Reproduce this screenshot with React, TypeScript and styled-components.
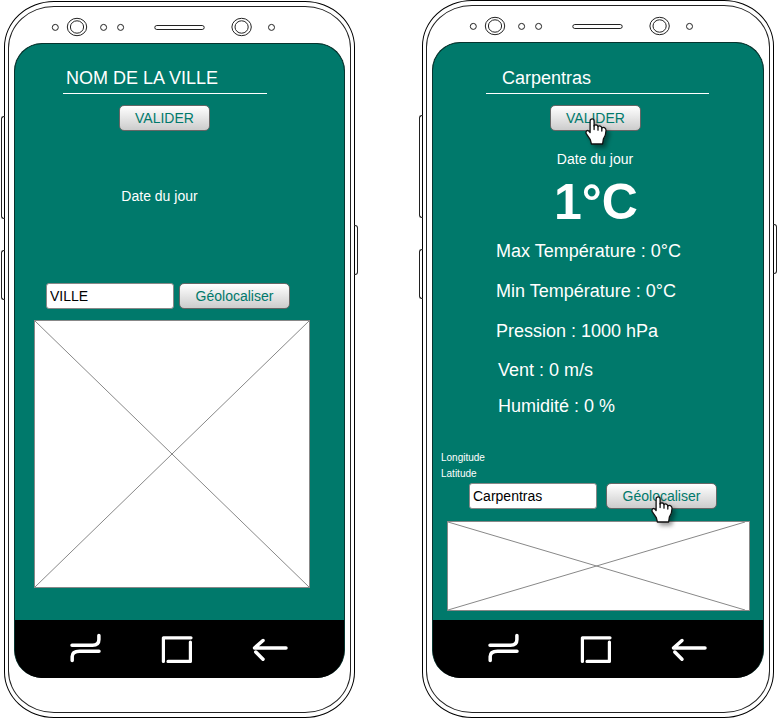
import React from 'react';
import styled, { createGlobalStyle } from 'styled-components';

const TEAL = '#00796b';

const GlobalStyle = createGlobalStyle`
  *, *::before, *::after { box-sizing: border-box; }
  body {
    margin: 0;
    background: #fff;
    font-family: "Liberation Sans", Arial, sans-serif;
  }
`;

const Board = styled.main`
  display: grid;
  grid-template-columns: 351fr 352fr;
  align-items: end;
  column-gap: 67px;
  padding: 0 3px 0 4px;
`;

const Shell = styled.section`
  position: relative;
  padding: 4px 3px;
  border: 1px solid #000;
  border-radius: 50px / 46px;
  background: #fff;
`;

const SideKey = styled.span<{ $side: 'left' | 'right'; $top: number; $height: number }>`
  position: absolute;
  ${({ $side }) => $side}: -4px;
  top: ${({ $top }) => $top}px;
  width: 4px;
  height: ${({ $height }) => $height}px;
  border: 1px solid #222;
  ${({ $side }) => ($side === 'left' ? 'border-right: 0; border-radius: 3px 0 0 3px;' : 'border-left: 0; border-radius: 0 3px 3px 0;')}
`;

const Face = styled.div`
  padding: 0 5px 34px;
  border: 1px solid #222;
  border-radius: 46px / 42px;
`;

const Bezel = styled.header`
  height: 36px;
  padding: 9px 0 0 35px;

  svg { display: block; }
`;

const Screen = styled.div`
  overflow: hidden;
  border: 1px solid #06342e;
  border-bottom: 0;
  border-radius: 28px;
  background: #000;
`;

const Content = styled.div<{ $top: number; $bottom: number }>`
  padding: ${({ $top }) => $top}px 0 ${({ $bottom }) => $bottom}px;
  background: ${TEAL};
  color: #fff;
`;

const SearchForm = styled.form<{ $left: number; $right: number }>`
  display: flex;
  flex-direction: column;
  align-items: flex-start;
  gap: 11px;
  margin: 0 ${({ $right }) => $right}px 0 ${({ $left }) => $left}px;
`;

const CityInput = styled.input<{ $indent: number }>`
  width: 100%;
  height: 30px;
  padding: 0 0 0 ${({ $indent }) => $indent}px;
  border: 0;
  border-bottom: 1px solid #fff;
  border-radius: 0;
  outline: 0;
  background: transparent;
  color: #fff;
  font: 18px "Liberation Sans", Arial, sans-serif;
`;

const ButtonHolder = styled.div<{ $left?: number }>`
  position: relative;
  margin-left: ${({ $left = 0 }) => $left}px;
`;

const PushButton = styled.button`
  display: block;
  height: 26px;
  padding: 0 15px;
  border: 1px solid #666;
  border-radius: 5px;
  background: linear-gradient(#fff, #ccc);
  color: ${TEAL};
  font: 14px "Liberation Sans", Arial, sans-serif;
`;

const LocateButton = styled(PushButton)`
  min-width: 111px;
`;

const Pointer = styled.svg<{ $left: number }>`
  position: absolute;
  left: ${({ $left }) => $left}px;
  top: 13px;
  overflow: visible;
  filter: drop-shadow(3px 3px 2px rgba(0, 0, 0, 0.4));
  pointer-events: none;
`;

const Today = styled.p<{ $above: number; $right: number }>`
  margin: ${({ $above }) => $above}px 0 0;
  padding-right: ${({ $right }) => $right}px;
  font-size: 14px;
  line-height: 20px;
  text-align: center;
`;

const Temperature = styled.p`
  margin: 5px 0 0;
  padding-right: 4px;
  font-size: 50px;
  font-weight: 700;
  line-height: 56px;
  text-align: center;
`;

const Readings = styled.ul<{ $above: number; $left: number; $gap: number }>`
  display: flex;
  flex-direction: column;
  gap: ${({ $gap }) => $gap}px;
  margin: ${({ $above }) => $above}px 0 0 ${({ $left }) => $left}px;
  padding: 0;
  list-style: none;
  font-size: 18px;
  line-height: 20px;
`;

const Coordinates = styled.ul`
  margin: 34px 0 0 8px;
  padding: 0;
  list-style: none;
  font-size: 10px;
  line-height: 16px;
`;

const LocateForm = styled.form<{ $above: number; $left: number; $gap: number }>`
  display: flex;
  gap: ${({ $gap }) => $gap}px;
  margin: ${({ $above }) => $above}px 0 0 ${({ $left }) => $left}px;
`;

const PlaceInput = styled.input`
  width: 128px;
  height: 26px;
  padding: 0 3px;
  border: 1px solid #888;
  border-radius: 3px;
  outline: 0;
  background: #fff;
  color: #000;
  font: 14px "Liberation Sans", Arial, sans-serif;
`;

const MapFrame = styled.div<{ $above: number; $left: number; $right: number; $height: number; $inset?: number }>`
  height: ${({ $height }) => $height}px;
  margin: ${({ $above }) => $above}px ${({ $right }) => $right}px 0 ${({ $left }) => $left}px;
  padding-right: ${({ $inset = 0 }) => $inset}px;
  border: 1px solid #888;
  background: #fff;

  svg { display: block; width: 100%; height: 100%; }
`;

const NavBar = styled.nav`
  display: flex;
  height: 58px;
  padding: 12px 55px 0 54px;
  justify-content: space-between;
  background: #000;
`;

const NavButton = styled.button`
  height: 34px;
  padding: 0;
  border: 0;
  background: none;

  svg { display: block; }
`;

function Lens({ x }: { x: number }) {
  return (
    <>
      <ellipse cx={x} cy="11" rx="9.7" ry="8.7" />
      <ellipse cx={x} cy="11" rx="6.6" ry="6.2" />
    </>
  );
}

function Sensors() {
  return (
    <svg width="228" height="22" viewBox="0 0 228 22" fill="#fff" stroke="#222" strokeWidth="1" aria-hidden="true">
      <circle cx="6.3" cy="11.4" r="3" />
      <Lens x={28} />
      <circle cx="54.6" cy="11.4" r="3" />
      <circle cx="71.6" cy="11.4" r="3" />
      <rect x="105.8" y="9.5" width="49.4" height="4" rx="2" />
      <Lens x={192.6} />
      <circle cx="222.5" cy="11.4" r="3" />
    </svg>
  );
}

function HandPointer({ left }: { left: number }) {
  return (
    <Pointer $left={left} width="22" height="27" viewBox="0 0 22 27" aria-hidden="true">
      <path
        d="M5.1 14.5V2.9a2 2 0 0 1 4 0V8C10.2 6.3 12.8 6.8 13 8.7C14.2 7.3 16.6 7.9 16.8 10C18.3 8.7 20.8 9.6 21 12C21.1 15.8 20.2 18.6 18.4 20.8L17.6 26H6.4L5.3 21.6L1.2 15.7C.3 13.2 2.7 11.3 4.2 13.4Z"
        fill="#fff"
        stroke="#111"
        strokeWidth="1.3"
        strokeLinejoin="round"
      />
      <path d="M9.1 7.5v4M13 8.7v3.5M16.8 10v3" fill="none" stroke="#111" strokeWidth="1.3" strokeLinecap="round" />
    </Pointer>
  );
}

function Cross() {
  return (
    <svg viewBox="0 0 100 100" preserveAspectRatio="none" aria-hidden="true">
      <path d="M0 0L100 100M100 0L0 100" stroke="#888" strokeWidth="1" vectorEffect="non-scaling-stroke" />
    </svg>
  );
}

function Navigation() {
  const stroke = { fill: 'none', stroke: '#fff', strokeWidth: 3.5, strokeLinecap: 'round' as const, strokeLinejoin: 'round' as const };
  return (
    <NavBar aria-label="Navigation">
      <NavButton type="button" aria-label="Applications récentes">
        <svg width="34" height="34" viewBox="0 0 34 34" {...stroke}>
          <path d="M3 13.2H23.5Q29.9 13.2 29.9 7.5V3.5" />
          <path d="M30 19.2H10.5Q3.2 19.2 3.2 24.5V28.5" />
        </svg>
      </NavButton>
      <NavButton type="button" aria-label="Accueil">
        <svg width="34" height="34" viewBox="0 0 34 34" {...stroke} strokeWidth="3.2">
          <path d="M3.4 29.5V5.8H31" />
          <path d="M30.4 10V29.4H8" />
        </svg>
      </NavButton>
      <NavButton type="button" aria-label="Retour">
        <svg width="38" height="34" viewBox="0 0 38 34" {...stroke}>
          <path d="M35 16H3.5L12 8.5" />
          <path d="M4.8 20L12 27.2" />
        </svg>
      </NavButton>
    </NavBar>
  );
}

function Phone({ label, children }: { label: string; children: React.ReactNode }) {
  return (
    <Shell aria-label={label}>
      <SideKey $side="left" $top={114} $height={103} />
      <SideKey $side="left" $top={248} $height={50} />
      <SideKey $side="right" $top={223} $height={50} />
      <Face>
        <Bezel>
          <Sensors />
        </Bezel>
        <Screen>
          {children}
          <Navigation />
        </Screen>
      </Face>
    </Shell>
  );
}

const keepPage = (event: React.FormEvent) => event.preventDefault();

export default function App() {
  return (
    <>
      <GlobalStyle />
      <Board>
        <Phone label="Recherche">
          <Content $top={20} $bottom={32}>
            <SearchForm $left={48} $right={77} onSubmit={keepPage}>
              <CityInput $indent={3} aria-label="Nom de la ville" defaultValue="NOM DE LA VILLE" />
              <ButtonHolder $left={56}>
                <PushButton type="submit">VALIDER</PushButton>
              </ButtonHolder>
            </SearchForm>
            <Today $above={55} $right={40}>Date du jour</Today>
            <LocateForm $above={77} $left={31} $gap={5} onSubmit={keepPage}>
              <PlaceInput aria-label="Ville" defaultValue="VILLE" />
              <LocateButton type="submit">Géolocaliser</LocateButton>
            </LocateForm>
            <MapFrame $above={11} $left={19} $right={34} $height={268}>
              <Cross />
            </MapFrame>
          </Content>
        </Phone>

        <Phone label="Résultat">
          <Content $top={21} $bottom={9}>
            <SearchForm $left={53} $right={54} onSubmit={keepPage}>
              <CityInput $indent={16} aria-label="Nom de la ville" defaultValue="Carpentras" />
              <ButtonHolder $left={64}>
                <PushButton type="submit">VALIDER</PushButton>
                <HandPointer left={35} />
              </ButtonHolder>
            </SearchForm>
            <Today $above={18} $right={6}>Date du jour</Today>
            <Temperature>1°C</Temperature>
            <Readings $above={11} $left={63} $gap={20}>
              <li>Max Température : 0°C</li>
              <li>Min Température : 0°C</li>
              <li>Pression : 1000 hPa</li>
            </Readings>
            <Readings $above={19} $left={65} $gap={16}>
              <li>Vent : 0 m/s</li>
              <li>Humidité : 0 %</li>
            </Readings>
            <Coordinates>
              <li>Longitude</li>
              <li>Latitude</li>
            </Coordinates>
            <LocateForm $above={1} $left={36} $gap={9} onSubmit={keepPage}>
              <PlaceInput aria-label="Ville" defaultValue="Carpentras" />
              <ButtonHolder>
                <LocateButton type="submit">Géolocaliser</LocateButton>
                <HandPointer left={45} />
              </ButtonHolder>
            </LocateForm>
            <MapFrame $above={12} $left={14} $right={13} $height={90} $inset={4}>
              <Cross />
            </MapFrame>
          </Content>
        </Phone>
      </Board>
    </>
  );
}
